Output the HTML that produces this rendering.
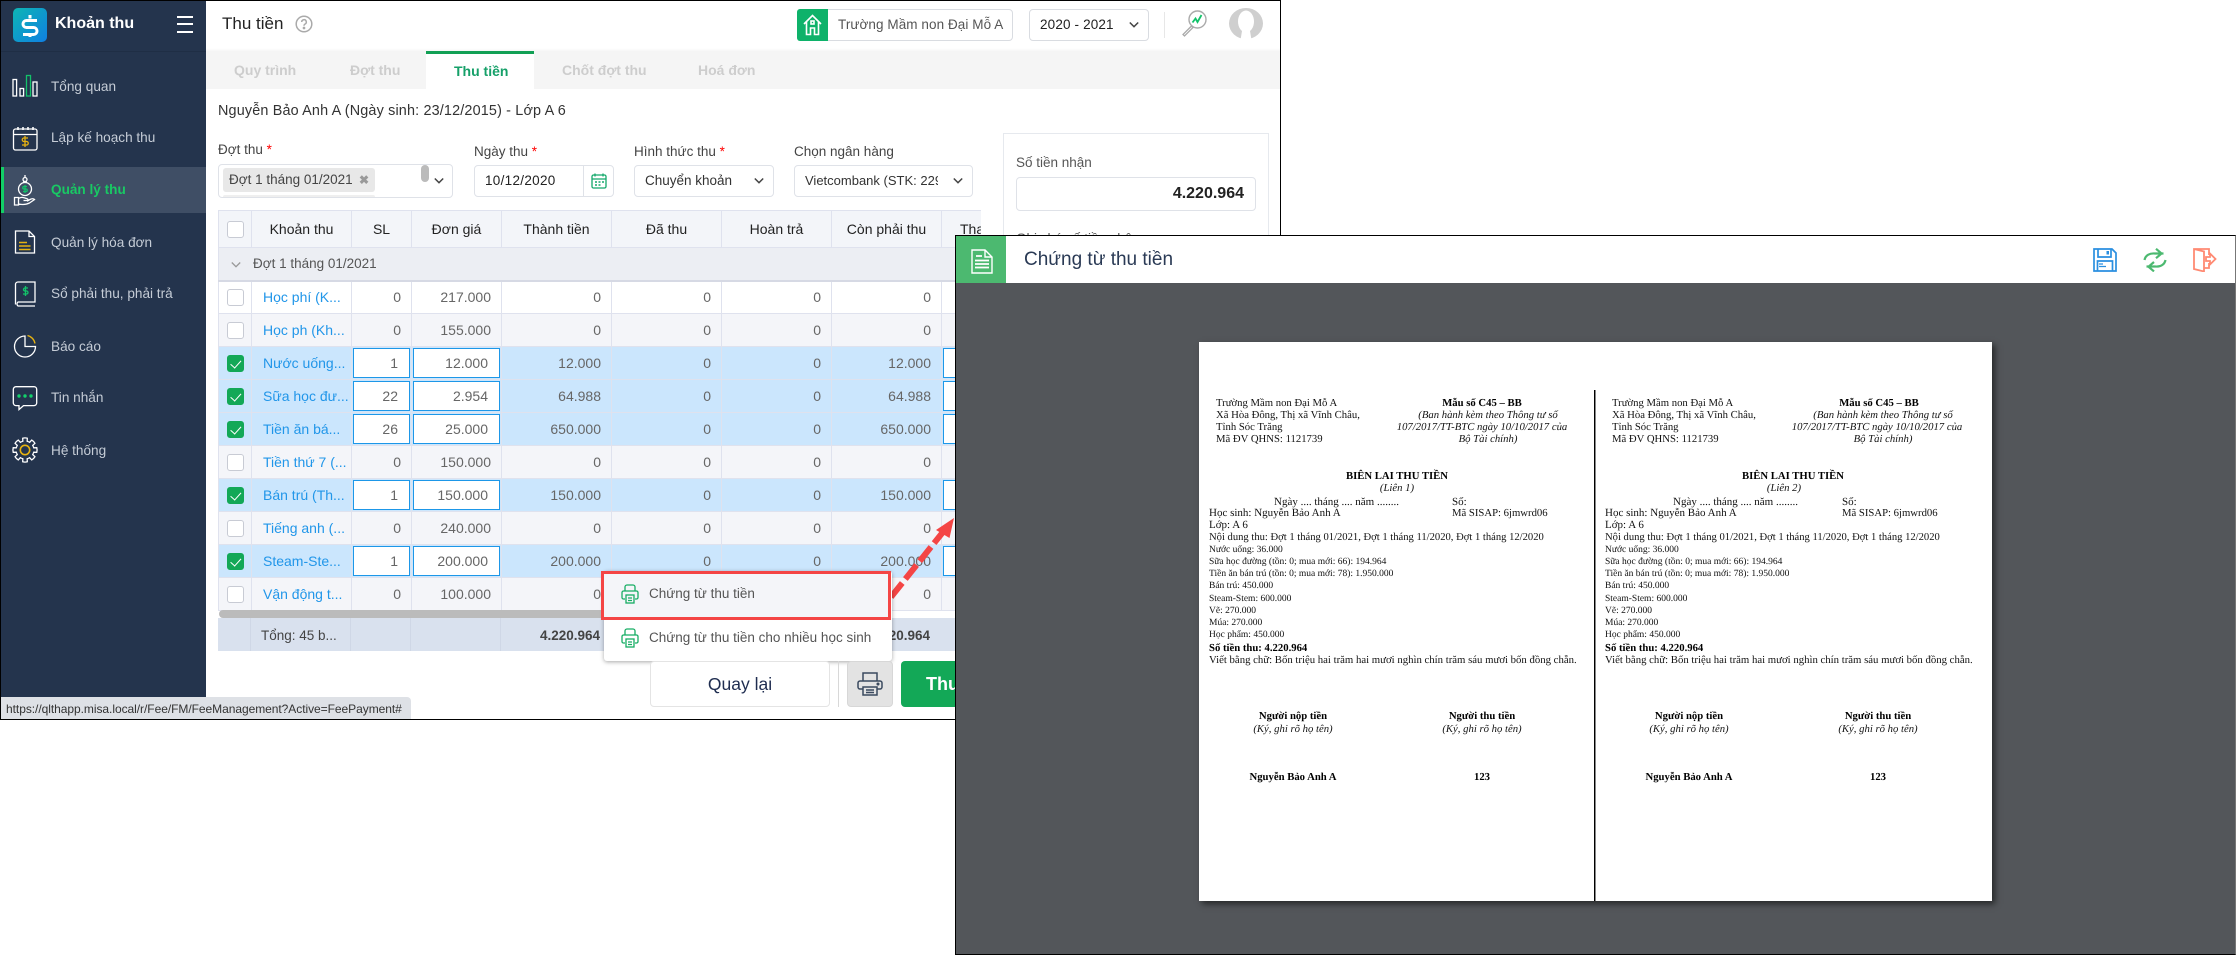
<!DOCTYPE html>
<html lang="vi">
<head>
<meta charset="utf-8">
<title>Chứng từ thu tiền</title>
<style>
*{box-sizing:border-box}
html,body{margin:0;padding:0;width:2237px;height:955px;overflow:hidden;background:#fff;font-family:"Liberation Sans","Noto Sans CJK SC",sans-serif;color:#333}
.a{position:absolute;white-space:nowrap;line-height:20px}
.cx{transform:translateX(-50%)}
#win{position:absolute;left:0;top:0;width:1281px;height:720px;overflow:hidden;background:#fff;border-top:1px solid #000;border-left:1px solid #000;border-right:1px solid #000;border-bottom:1px solid #000}
#win>*{margin-left:-1px;margin-top:-1px}
.box{position:absolute;border:1px solid #dfe2e8;border-radius:4px;background:#fff}
.m{position:absolute;left:51px;color:#c5ccd6;font-size:13.6px;line-height:20px;white-space:nowrap}
.tab{position:absolute;top:60px;font-size:14px;font-weight:bold;color:#cdcdcd;line-height:20px;white-space:nowrap}
.lb{font-size:13.5px;color:#444}
.lb b{color:#f00;font-weight:normal}
.val{font-size:13.5px;color:#333}
#tw{position:absolute;left:218px;top:210px;width:763px;height:401px;overflow:hidden}
table{border-collapse:collapse;table-layout:fixed;width:763px}
td,th{border:1px solid #dfe2ee;padding:0 10px;font-size:14px;height:33px;text-align:right;color:#666;font-weight:normal;white-space:nowrap;overflow:hidden}
th{height:37px;background:#f3f5f9;color:#222;text-align:center;font-weight:normal;padding:0 2px}
tr.g td{background:#eceef3;border-bottom:2px solid #d6d9e4;text-align:left;color:#555;padding-left:34px;font-size:13.5px}
tr.w td{background:#fff}
tr.z td{background:#f4f5f9}
tr.s td{background:#cbe6fd}
td.n{text-align:left;color:#2196e9;padding-left:11px;padding-right:0}
td.c{padding:0;text-align:center}
td.i{padding:0 1px 1px 1px;background:#cbe6fd}
td.i div{height:30px;line-height:28px;background:#fff;border:1px solid #1d97e8;padding-right:11px}
i.cb{display:inline-block;width:17px;height:17px;border:1px solid #c8cbd4;border-radius:3px;background:#fff;position:relative;vertical-align:middle}
i.on{background:#13a857;border-color:#13a857}
i.on:after{content:"";position:absolute;left:5px;top:2.5px;width:5px;height:8.5px;border:solid #fff;border-width:0 1.6px 1.6px 0;transform:rotate(42deg)}
#rc{position:absolute;left:0;top:0;width:2237px;height:955px;pointer-events:none;filter:blur(.25px)}
.d{position:absolute;white-space:nowrap;font-family:"Liberation Serif","Noto Serif CJK SC",serif;font-size:10.7px;line-height:12px;color:#111;text-rendering:geometricPrecision}
.r{font-size:11px}
.sm{font-size:9.5px}
.ln{font-size:10.75px}
.nd{font-size:10.6px}
.bi{font-weight:bold;color:#000}
.it{font-style:italic}
#modal{position:absolute;left:955px;top:235px;width:1281px;height:720px;background:#53565a;border:1px solid #000;border-right:1px solid #777;overflow:hidden}
</style>
</head>
<body>

<div id="win">
  <!-- sidebar -->
  <div style="position:absolute;left:0;top:0;width:206px;height:720px;background:#24344d"></div>
  <div style="position:absolute;left:13px;top:8px;width:34px;height:34px;border-radius:5px;background:linear-gradient(135deg,#0eb6b4,#0f7fe2)">
    <svg width="34" height="34" viewBox="0 0 34 34" fill="none" stroke="#fff" stroke-width="3"><path d="M24 12.5H13.5a3.5 3.5 0 0 0 0 7h7a3.5 3.5 0 0 1 0 7H10"/><path d="M17 7v3.5M17 25.5v3.5"/></svg>
  </div>
  <div class="a" style="left:55px;top:14px;font-size:16px;font-weight:bold;color:#fff">Khoản thu</div>
  <div style="position:absolute;left:177px;top:16px;width:16px;height:2px;background:#fff"></div>
  <div style="position:absolute;left:177px;top:23px;width:16px;height:2px;background:#fff"></div>
  <div style="position:absolute;left:177px;top:31px;width:16px;height:2px;background:#fff"></div>
  <div style="position:absolute;left:0;top:51px;width:206px;height:1px;background:#1f2e45"></div>

  <div style="position:absolute;left:1px;top:167px;width:205px;height:46px;background:#3f4e65;border-left:3px solid #12cf66"></div>

  <svg style="position:absolute;left:0;top:60px" width="206" height="420" viewBox="0 60 206 420" fill="none" stroke="#fff" stroke-width="1.3">
    <defs><path id="tooth" d="M-3.44-8.31L-2.18-8.73-2.29-11.78Q0-12.4 2.29-11.78L2.18-8.73 3.44-8.31"/></defs>
    <!-- tong quan -->
    <rect x="13" y="79.5" width="3.6" height="16.5"/><rect x="20" y="88.5" width="3.6" height="7.5"/>
    <rect x="26.5" y="75.5" width="4" height="20.5" stroke="#13c26a"/><rect x="33" y="82" width="4" height="14"/>
    <!-- lap ke hoach -->
    <rect x="13.5" y="129" width="23.5" height="21" rx="2"/><path d="M13.5 134.5H37" />
    <path d="M18 127v3M23 127v3M28 127v3M33 127v3" stroke-width="1.6"/>
    <path d="M28 138h-4a1.5 1.5 0 0 0 0 3.5h2.5a1.5 1.5 0 0 1 0 3.5H22M25 136v11" stroke="#e6b211"/>
    <!-- quan ly thu -->
    <circle cx="25" cy="189" r="6.5"/><circle cx="25" cy="179.5" r="2"/><path d="M25 175v2M23 182l4 0" />
    <path d="M27 186.5h-3a1.2 1.2 0 0 0 0 2.5h2a1.2 1.2 0 0 1 0 2.5h-3M25 185v8" stroke="#13c26a"/>
    <path d="M14.5 197.5h4v7.5h-4zM18.5 198.5c3-2 5-1 8 0 2 .6 2 2 0 2h-3M18.5 204c5 1 8 .5 11-1l5-3.5c-1-1-3-.8-4.5 0l-3 1.7"/>
    <!-- hoa don -->
    <path d="M15.5 231h13.5l5.5 5.5V253h-19z"/><path d="M29 231v5.5h5.5"/>
    <path d="M19 242.5h8M19 246h11.5M19 249.5h11.5" stroke="#e6b211" stroke-width="1.5"/>
    <!-- so phai thu -->
    <path d="M18 282h17v20H18a2.5 2.5 0 0 0 0 4h17M15.5 304.500V284.500a2.500 2.500 0 0 1 2.500-2.500" />
    <path d="M28 288h-3a1.200 1.200 0 0 0 0 3h1.500a1.200 1.200 0 0 1 0 3h-3.500M25.500 286v10" stroke="#13c26a"/>
    <!-- bao cao -->
    <path d="M25 336a10.500 10.500 0 1 0 10.500 10.500H25z"/><path d="M27.500 335.500a10 10 0 0 1 7.500 8" stroke="#e6b211"/>
    <!-- tin nhan -->
    <path d="M16 386.700h18a2.700 2.700 0 0 1 2.700 2.700v13.500a2.700 2.700 0 0 1-2.700 2.700H23.500l-4.500 4v-4h-3a2.700 2.700 0 0 1-2.700-2.700V389.400a2.700 2.700 0 0 1 2.700-2.700z"/>
    <circle cx="19" cy="396" r="1.700" fill="#13d06a" stroke="none"/><circle cx="25" cy="396" r="1.700" fill="#13d06a" stroke="none"/><circle cx="31" cy="396" r="1.700" fill="#13d06a" stroke="none"/>
    <!-- he thong -->
    <g transform="translate(25 450)"><use href="#tooth"/><use href="#tooth" transform="rotate(45)"/><use href="#tooth" transform="rotate(90)"/><use href="#tooth" transform="rotate(135)"/><use href="#tooth" transform="rotate(180)"/><use href="#tooth" transform="rotate(225)"/><use href="#tooth" transform="rotate(270)"/><use href="#tooth" transform="rotate(315)"/>
    <circle r="4.700" stroke="#e6b211" stroke-width="1.600"/></g>
  </svg>

  <div class="m" style="top:77px">Tổng quan</div>
  <div class="m" style="top:128px">Lập kế hoạch thu</div>
  <div class="m" style="top:180px;color:#19c964;font-weight:bold">Quản lý thu</div>
  <div class="m" style="top:233px">Quản lý hóa đơn</div>
  <div class="m" style="top:284px">Sổ phải thu, phải trả</div>
  <div class="m" style="top:337px">Báo cáo</div>
  <div class="m" style="top:388px">Tin nhắn</div>
  <div class="m" style="top:441px">Hệ thống</div>

  <!-- header -->
  <div class="a" style="left:222px;top:14px;font-size:17px;color:#222">Thu tiền</div>
  <svg style="position:absolute;left:295px;top:15px" width="18" height="18" viewBox="0 0 18 18" fill="none" stroke="#aaa" stroke-width="1.500"><circle cx="9" cy="9" r="7.800"/><path d="M6.700 7a2.300 2.300 0 1 1 3.400 2c-.8.500-1.100 1-1.100 1.800"/><circle cx="9" cy="13" r=".6" fill="#aaa"/></svg>
  <div style="position:absolute;left:206px;top:48px;width:1075px;height:3px;background:linear-gradient(rgba(255,255,255,0),rgba(0,0,0,.03))"></div>

  <div class="box" style="left:797px;top:9px;width:216px;height:32px;border-color:#d9dce1"></div>
  <div style="position:absolute;left:797px;top:9px;width:31px;height:32px;background:#0eb26a;border-radius:3px 0 0 3px">
    <svg width="31" height="32" viewBox="0 0 31 32" fill="none" stroke="#fff" stroke-width="1.600"><path d="M7 15l8.500-8.500L24 15M9.500 13v12.500h4V19h4v6.500h4V13"/><rect x="14" y="12" width="3" height="3"/></svg>
  </div>
  <div class="a val" style="left:838px;top:15px;color:#555;letter-spacing:.07px">Trường Mầm non Đại Mỗ A</div>
  <div class="box" style="left:1029px;top:9px;width:120px;height:32px;border-color:#d9dce1"></div>
  <div class="a val" style="left:1040px;top:15px;letter-spacing:.15px;color:#222">2020 - 2021</div>
  <svg style="position:absolute;left:1129px;top:21px" width="10" height="8" fill="none" stroke="#444" stroke-width="1.500"><path d="M.8 1.500l4.200 4.200 4.200-4.200"/></svg>
  <div style="position:absolute;left:1164px;top:12px;width:1px;height:26px;background:#e7e7e7"></div>
  <svg style="position:absolute;left:1180px;top:9px" width="28" height="28" viewBox="0 0 28 28" fill="none"><circle cx="17.500" cy="10.500" r="8.500" stroke="#aaa" stroke-width="1.400"/><path d="M11.500 17l-8.500 8.500 1.500 1.500 8.500-8.500z" stroke="#aaa" stroke-width="1.300"/><path d="M12.500 13.500l3-4 2 3.500 4-7" stroke="#13c26a" stroke-width="1.800"/></svg>
  <svg style="position:absolute;left:1229px;top:8px" width="34" height="32" viewBox="0 0 34 32"><ellipse cx="17" cy="15.500" rx="17" ry="15.500" fill="#cfcfcf"/><ellipse cx="17" cy="13.500" rx="8" ry="11" fill="#fff"/><path d="M13 23h8l1.500 9h-11z" fill="#fff"/></svg>

  <!-- tabs -->
  <div style="position:absolute;left:206px;top:51px;width:1075px;height:38px;background:#f5f5f5"></div>
  <div style="position:absolute;left:426px;top:51px;width:108px;height:38px;background:#fff;border-top:3px solid #12a055"></div>
  <div class="tab" style="left:234px">Quy trình</div>
  <div class="tab" style="left:350px">Đợt thu</div>
  <div class="tab" style="left:454px;top:61px;color:#16a069">Thu tiền</div>
  <div class="tab" style="left:562px">Chốt đợt thu</div>
  <div class="tab" style="left:698px">Hoá đơn</div>

  <div class="a" style="left:218px;top:101px;font-size:14.4px;color:#333;letter-spacing:.16px">Nguyễn Bảo Anh A (Ngày sinh: 23/12/2015) - Lớp A 6</div>

  <!-- form -->
  <div class="a lb" style="left:218px;top:140px">Đợt thu <b>*</b></div>
  <div class="a lb" style="left:474px;top:142px">Ngày thu <b>*</b></div>
  <div class="a lb" style="left:634px;top:142px">Hình thức thu <b>*</b></div>
  <div class="a lb" style="left:794px;top:142px">Chọn ngân hàng</div>

  <div class="box" style="left:218px;top:164px;width:235px;height:34px"></div>
  <div style="position:absolute;left:223px;top:168px;width:152px;height:24px;background:#e8e8e8;border-radius:3px"></div>
  <div style="position:absolute;left:223px;top:195px;width:152px;height:2px;background:#efefef;border-radius:3px 3px 0 0"></div>
  <div class="a val" style="left:229px;top:170px;font-size:13.500px;color:#444">Đợt 1 tháng 01/2021</div>
  <div class="a" style="left:359px;top:170px;font-size:12px;color:#999;font-weight:bold">✖</div>
  <div style="position:absolute;left:421px;top:165px;width:8px;height:17px;border-radius:4px;background:#bbb"></div>
  <svg style="position:absolute;left:434px;top:177px" width="10" height="8" fill="none" stroke="#444" stroke-width="1.500"><path d="M.8 1.500l4.200 4.200 4.200-4.200"/></svg>

  <div class="box" style="left:474px;top:165px;width:140px;height:32px"></div>
  <div style="position:absolute;left:583px;top:165px;width:1px;height:32px;background:#dfe2e8"></div>
  <div class="a val" style="left:485px;top:171px;color:#222;letter-spacing:.3px">10/12/2020</div>
  <svg style="position:absolute;left:591px;top:173px" width="16" height="16" viewBox="0 0 16 16" fill="none" stroke="#13a86a" stroke-width="1.300"><rect x="1" y="2" width="14" height="13" rx="1.500"/><path d="M1 6h14M4 .5v3M12 .5v3"/><path d="M4 9h2M7.500 9h2M11 9h2M4 12h2M7.500 12h2" stroke-width="1.600"/></svg>

  <div class="box" style="left:634px;top:165px;width:140px;height:32px"></div>
  <div class="a val" style="left:645px;top:171px;color:#333">Chuyển khoản</div>
  <svg style="position:absolute;left:754px;top:177px" width="10" height="8" fill="none" stroke="#444" stroke-width="1.500"><path d="M.8 1.500l4.200 4.200 4.200-4.200"/></svg>

  <div class="box" style="left:794px;top:165px;width:179px;height:32px"></div>
  <div class="a val" style="left:805px;top:171px;width:133px;overflow:hidden;color:#333;font-size:13px">Vietcombank (STK: 2291)</div>
  <svg style="position:absolute;left:953px;top:177px" width="10" height="8" fill="none" stroke="#444" stroke-width="1.500"><path d="M.8 1.500l4.200 4.200 4.200-4.200"/></svg>

  <!-- right panel -->
  <div style="position:absolute;left:1003px;top:133px;width:266px;height:300px;border:1px solid #e6e9ee"></div>
  <div class="a lb" style="left:1016px;top:153px;color:#555">Số tiền nhận</div>
  <div class="box" style="left:1016px;top:177px;width:240px;height:34px"></div>
  <div class="a" style="right:36px;top:184px;font-size:16px;font-weight:bold;color:#222">4.220.964</div>
  <div class="a lb" style="left:1016px;top:229px;color:#555">Ghi chú số tiền nhận</div>

  <!-- table -->
  <div id="tw">
    <table>
      <colgroup><col style="width:33px"><col style="width:100px"><col style="width:60px"><col style="width:90px"><col style="width:110px"><col style="width:110px"><col style="width:110px"><col style="width:110px"><col style="width:40px"></colgroup>
      <tr><th><i class="cb"></i></th><th>Khoản thu</th><th>SL</th><th>Đơn giá</th><th>Thành tiền</th><th>Đã thu</th><th>Hoàn trả</th><th>Còn phải thu</th><th style="text-align:left;padding-left:18px">Tha</th></tr>
      <tr class="g"><td colspan="9" style="position:relative">Đợt 1 tháng 01/2021<svg style="position:absolute;left:12px;top:13px" width="10" height="8" fill="none" stroke="#999" stroke-width="1.300"><path d="M.8 1.500l4.200 4.200 4.200-4.200"/></svg></td></tr>
      <tr class="w"><td class="c"><i class="cb"></i></td><td class="n">Học phí (K...</td><td>0</td><td>217.000</td><td>0</td><td>0</td><td>0</td><td>0</td><td></td></tr>
      <tr class="z"><td class="c"><i class="cb"></i></td><td class="n">Học ph (Kh...</td><td>0</td><td>155.000</td><td>0</td><td>0</td><td>0</td><td>0</td><td></td></tr>
      <tr class="s"><td class="c"><i class="cb on"></i></td><td class="n">Nước uống...</td><td class="i"><div>1</div></td><td class="i"><div>12.000</div></td><td>12.000</td><td>0</td><td>0</td><td>12.000</td><td class="i"><div></div></td></tr>
      <tr class="s"><td class="c"><i class="cb on"></i></td><td class="n">Sữa học đư...</td><td class="i"><div>22</div></td><td class="i"><div>2.954</div></td><td>64.988</td><td>0</td><td>0</td><td>64.988</td><td class="i"><div></div></td></tr>
      <tr class="s"><td class="c"><i class="cb on"></i></td><td class="n">Tiền ăn bá...</td><td class="i"><div>26</div></td><td class="i"><div>25.000</div></td><td>650.000</td><td>0</td><td>0</td><td>650.000</td><td class="i"><div></div></td></tr>
      <tr class="z"><td class="c"><i class="cb"></i></td><td class="n">Tiền thứ 7 (...</td><td>0</td><td>150.000</td><td>0</td><td>0</td><td>0</td><td>0</td><td></td></tr>
      <tr class="s"><td class="c"><i class="cb on"></i></td><td class="n">Bán trú (Th...</td><td class="i"><div>1</div></td><td class="i"><div>150.000</div></td><td>150.000</td><td>0</td><td>0</td><td>150.000</td><td class="i"><div></div></td></tr>
      <tr class="z"><td class="c"><i class="cb"></i></td><td class="n">Tiếng anh (...</td><td>0</td><td>240.000</td><td>0</td><td>0</td><td>0</td><td>0</td><td></td></tr>
      <tr class="s"><td class="c"><i class="cb on"></i></td><td class="n">Steam-Ste...</td><td class="i"><div>1</div></td><td class="i"><div>200.000</div></td><td>200.000</td><td>0</td><td>0</td><td>200.000</td><td class="i"><div></div></td></tr>
      <tr class="z"><td class="c"><i class="cb"></i></td><td class="n">Vận động t...</td><td>0</td><td>100.000</td><td>0</td><td>0</td><td>0</td><td>0</td><td></td></tr>
    </table>
  </div>
  <div style="position:absolute;left:219px;top:610px;width:520px;height:8px;border-radius:4px;background:#bbb"></div>

  <!-- summary -->
  <div style="position:absolute;left:218px;top:618px;width:763px;height:33px;background:#d9e1ee"></div>
  <div style="position:absolute;left:250px;top:618px;width:1px;height:33px;background:#cfd7e6"></div>
  <div style="position:absolute;left:350px;top:618px;width:1px;height:33px;background:#cfd7e6"></div>
  <div style="position:absolute;left:410px;top:618px;width:1px;height:33px;background:#cfd7e6"></div>
  <div style="position:absolute;left:500px;top:618px;width:1px;height:33px;background:#cfd7e6"></div>
  <div class="a" style="left:261px;top:626px;font-size:13.500px;color:#444">Tổng: 45 b...</div>
  <div class="a" style="left:500px;width:100px;text-align:right;top:626px;font-size:13.500px;font-weight:bold;color:#444">4.220.964</div>
  <div class="a" style="left:830px;width:100px;text-align:right;top:626px;font-size:13.500px;font-weight:bold;color:#444">4.220.964</div>

  <!-- arrow -->
  <svg style="position:absolute;left:0;top:0;pointer-events:none" width="1281" height="720" fill="none">
    <path d="M891 597L943 532" stroke="#f44545" stroke-width="6" stroke-dasharray="18 5"/>
    <path d="M954 518L936 530 949.500 538z" fill="#f44545"/>
  </svg>

  <!-- popup -->
  <div style="position:absolute;left:604px;top:571px;width:288px;height:90px;background:#fff;border-radius:3px;box-shadow:0 1px 4px rgba(0,0,0,.35)"></div>
  <div style="position:absolute;left:601px;top:571px;width:290px;height:49px;background:#f4f5f9;border:3px solid #f44545"></div>
  <svg style="position:absolute;left:621px;top:584px" width="18" height="20" viewBox="0 0 18 20" fill="none" stroke="#16ad63" stroke-width="1.300"><path d="M4 7V3a2 2 0 0 1 2-2h6a2 2 0 0 1 2 2v4"/><path d="M4 15H2.500A1.500 1.500 0 0 1 1 13.500v-5A1.500 1.500 0 0 1 2.500 7h13A1.500 1.500 0 0 1 17 8.500v5a1.500 1.500 0 0 1-1.500 1.500H14"/><rect x="5" y="11" width="8" height="8"/><path d="M7 14h4M7 16.500h4"/></svg>
  <svg style="position:absolute;left:621px;top:628px" width="18" height="20" viewBox="0 0 18 20" fill="none" stroke="#16ad63" stroke-width="1.300"><path d="M4 7V3a2 2 0 0 1 2-2h6a2 2 0 0 1 2 2v4"/><path d="M4 15H2.500A1.500 1.500 0 0 1 1 13.500v-5A1.500 1.500 0 0 1 2.500 7h13A1.500 1.500 0 0 1 17 8.500v5a1.500 1.500 0 0 1-1.500 1.500H14"/><rect x="5" y="11" width="8" height="8"/><path d="M7 14h4M7 16.500h4"/></svg>
  <div class="a" style="left:649px;top:584px;font-size:13.500px;color:#555">Chứng từ thu tiền</div>
  <div class="a" style="left:649px;top:628px;font-size:13.500px;color:#555">Chứng từ thu tiền cho nhiều học sinh</div>

  <!-- buttons -->
  <div class="box" style="left:650px;top:661px;width:180px;height:46px;border-color:#e4e4e4"></div>
  <div class="a cx" style="left:740px;top:674px;font-size:17.5px;color:#1f2d50">Quay lại</div>
  <div style="position:absolute;left:838px;top:661px;width:1px;height:46px;background:#d8d8d8"></div>
  <div style="position:absolute;left:847px;top:661px;width:46px;height:46px;background:#e3e3e3;border:1px solid #d7d7d7;border-radius:4px"></div>
  <svg style="position:absolute;left:857px;top:671px" width="26" height="26" viewBox="0 0 26 26" fill="none" stroke="#3b4a5f" stroke-width="1.500"><path d="M6 10V2h14v8"/><path d="M6 18H3a2 2 0 0 1-2-2v-4a2 2 0 0 1 2-2h20a2 2 0 0 1 2 2v4a2 2 0 0 1-2 2h-3"/><rect x="6" y="16" width="14" height="8"/><path d="M9 19h8M9 21.500h8"/><circle cx="21" cy="13" r=".8" fill="#3b4a5f"/></svg>
  <div style="position:absolute;left:901px;top:661px;width:70px;height:46px;background:#13a857;border-radius:4px"></div>
  <div class="a" style="left:926px;top:674px;font-size:18px;font-weight:bold;color:#fff">Thu</div>

  <!-- status -->
  <div style="position:absolute;left:1px;top:697px;width:410px;height:22px;background:#dee1e6;border-radius:0 4px 0 0"></div>
  <div class="a" style="left:6px;top:699px;font-size:12px;color:#333;letter-spacing:-.05px">https://qlthapp.misa.local/r/Fee/FM/FeeManagement?Active=FeePayment#</div>
</div>

<!-- modal -->
<div id="modal">
  <div style="position:absolute;left:0;top:0;width:100%;height:47px;background:#fff"></div>
  <div style="position:absolute;left:0;top:0;width:50px;height:47px;background:#4cb970"></div>
  <svg style="position:absolute;left:15px;top:13px" width="22" height="25" viewBox="0 0 22 25" fill="none" stroke="#fff" stroke-width="1.400"><path d="M1 1h13l7 7v16H1z"/><path d="M14 1v7h7"/><path d="M5 7h6M4 11.500h14M4 15h14M4 18.500h14" stroke-width="1.700"/></svg>
  <div class="a" style="left:68px;top:14px;font-size:19px;color:#2a3a55;line-height:20px">Chứng từ thu tiền</div>
  <svg style="position:absolute;left:1137px;top:12px" width="24" height="24" viewBox="0 0 24 24" fill="none" stroke="#2a8fe0" stroke-width="1.700"><path d="M1 1h18l4 4v18H1z"/><path d="M5 1v8h13V1"/><rect x="13.500" y="3" width="2.500" height="3.500" fill="#2a8fe0" stroke="none"/><path d="M4.500 23V13h15v10"/><path d="M6 16h4M6 18.500h7" stroke-width="1.200"/></svg>
  <svg style="position:absolute;left:1187px;top:12px" width="24" height="24" viewBox="0 0 24 24" fill="none" stroke="#4cb970" stroke-width="2.200"><path d="M1.500 12C2.500 7 7 5 12 5.500h8.500M13 .800l5.500 4.700-5.500 4.700"/><path d="M22.500 12c-1 5-5.500 7-10.500 6.500H3.500M11 14l-5.500 4.700 5.500 4.700"/></svg>
  <svg style="position:absolute;left:1237px;top:12px" width="24" height="24" viewBox="0 0 24 24" fill="none" stroke="#ff8a73" stroke-width="1.800"><path d="M16 7V1H1v20l10 2.500V3.500L1 1"/><path d="M11 20h5v-5"/><path d="M13 9h4V5.500l5.500 5.500-5.500 5.500V13h-4z"/></svg>

  <div style="position:absolute;left:243px;top:106px;width:793px;height:559px;background:#fff;box-shadow:3px 3px 6px rgba(0,0,0,.55)"></div>
  <div style="position:absolute;left:638px;top:154px;width:1px;height:511px;background:#000"></div>
  <div style="position:absolute;left:639px;top:154px;width:1px;height:511px;background:#888"></div>
</div>

<!-- receipt text, Lien 1 -->
<div id="rc">
<span class="d" style="left:1216px;top:397px">Trường Mầm non Đại Mỗ A</span>
<span class="d" style="left:1216px;top:409px">Xã Hòa Đông, Thị xã Vĩnh Châu,</span>
<span class="d" style="left:1216px;top:421px">Tỉnh Sóc Trăng</span>
<span class="d" style="left:1216px;top:433px">Mã ĐV QHNS: 1121739</span>
<span class="d bi cx" style="left:1482px;top:397px">Mẫu số C45 – BB</span>
<span class="d it cx" style="left:1488px;top:409px">(Ban hành kèm theo Thông tư số</span>
<span class="d it cx" style="left:1482px;top:421px">107/2017/TT-BTC ngày 10/10/2017 của</span>
<span class="d it cx" style="left:1488px;top:433px">Bộ Tài chính)</span>
<span class="d bi cx" style="left:1397px;top:470px">BIÊN LAI THU TIỀN</span>
<span class="d it cx" style="left:1397px;top:482px">(Liên 1)</span>
<span class="d r" style="left:1274px;top:496px">Ngày .... tháng .... năm ........</span>
<span class="d r" style="left:1452px;top:496px">Số:</span>
<span class="d r" style="left:1209px;top:507px">Học sinh: Nguyễn Bảo Anh A</span>
<span class="d" style="left:1452px;top:507px">Mã SISAP: 6jmwrd06</span>
<span class="d r" style="left:1209px;top:519px">Lớp: A 6</span>
<span class="d nd" style="left:1209px;top:532px">Nội dung thu: Đợt 1 tháng 01/2021, Đợt 1 tháng 11/2020, Đợt 1 tháng 12/2020</span>
<span class="d sm" style="left:1209px;top:544px">Nước uống: 36.000</span>
<span class="d sm" style="left:1209px;top:556px">Sữa học đường (tồn: 0; mua mới: 66): 194.964</span>
<span class="d sm" style="left:1209px;top:568px">Tiền ăn bán trú (tồn: 0; mua mới: 78): 1.950.000</span>
<span class="d sm" style="left:1209px;top:580px">Bán trú: 450.000</span>
<span class="d sm" style="left:1209px;top:593px">Steam-Stem: 600.000</span>
<span class="d sm" style="left:1209px;top:605px">Vẽ: 270.000</span>
<span class="d sm" style="left:1209px;top:617px">Múa: 270.000</span>
<span class="d sm" style="left:1209px;top:629px">Học phẩm: 450.000</span>
<span class="d bi" style="left:1209px;top:642px">Số tiền thu: 4.220.964</span>
<span class="d ln" style="left:1209px;top:654px">Viết bằng chữ: Bốn triệu hai trăm hai mươi nghìn chín trăm sáu mươi bốn đồng chẵn.</span>
<span class="d bi cx" style="left:1293px;top:710px">Người nộp tiền</span>
<span class="d it cx" style="left:1293px;top:723px">(Ký, ghi rõ họ tên)</span>
<span class="d bi cx" style="left:1482px;top:710px">Người thu tiền</span>
<span class="d it cx" style="left:1482px;top:723px">(Ký, ghi rõ họ tên)</span>
<span class="d bi cx" style="left:1293px;top:771px">Nguyễn Bảo Anh A</span>
<span class="d bi cx" style="left:1482px;top:771px">123</span>

<!-- Lien 2 -->
<span class="d" style="left:1612px;top:397px">Trường Mầm non Đại Mỗ A</span>
<span class="d" style="left:1612px;top:409px">Xã Hòa Đông, Thị xã Vĩnh Châu,</span>
<span class="d" style="left:1612px;top:421px">Tỉnh Sóc Trăng</span>
<span class="d" style="left:1612px;top:433px">Mã ĐV QHNS: 1121739</span>
<span class="d bi cx" style="left:1879px;top:397px">Mẫu số C45 – BB</span>
<span class="d it cx" style="left:1883px;top:409px">(Ban hành kèm theo Thông tư số</span>
<span class="d it cx" style="left:1877px;top:421px">107/2017/TT-BTC ngày 10/10/2017 của</span>
<span class="d it cx" style="left:1883px;top:433px">Bộ Tài chính)</span>
<span class="d bi cx" style="left:1793px;top:470px">BIÊN LAI THU TIỀN</span>
<span class="d it cx" style="left:1784px;top:482px">(Liên 2)</span>
<span class="d r" style="left:1673px;top:496px">Ngày .... tháng .... năm ........</span>
<span class="d r" style="left:1842px;top:496px">Số:</span>
<span class="d r" style="left:1605px;top:507px">Học sinh: Nguyễn Bảo Anh A</span>
<span class="d" style="left:1842px;top:507px">Mã SISAP: 6jmwrd06</span>
<span class="d r" style="left:1605px;top:519px">Lớp: A 6</span>
<span class="d nd" style="left:1605px;top:532px">Nội dung thu: Đợt 1 tháng 01/2021, Đợt 1 tháng 11/2020, Đợt 1 tháng 12/2020</span>
<span class="d sm" style="left:1605px;top:544px">Nước uống: 36.000</span>
<span class="d sm" style="left:1605px;top:556px">Sữa học đường (tồn: 0; mua mới: 66): 194.964</span>
<span class="d sm" style="left:1605px;top:568px">Tiền ăn bán trú (tồn: 0; mua mới: 78): 1.950.000</span>
<span class="d sm" style="left:1605px;top:580px">Bán trú: 450.000</span>
<span class="d sm" style="left:1605px;top:593px">Steam-Stem: 600.000</span>
<span class="d sm" style="left:1605px;top:605px">Vẽ: 270.000</span>
<span class="d sm" style="left:1605px;top:617px">Múa: 270.000</span>
<span class="d sm" style="left:1605px;top:629px">Học phẩm: 450.000</span>
<span class="d bi" style="left:1605px;top:642px">Số tiền thu: 4.220.964</span>
<span class="d ln" style="left:1605px;top:654px">Viết bằng chữ: Bốn triệu hai trăm hai mươi nghìn chín trăm sáu mươi bốn đồng chẵn.</span>
<span class="d bi cx" style="left:1689px;top:710px">Người nộp tiền</span>
<span class="d it cx" style="left:1689px;top:723px">(Ký, ghi rõ họ tên)</span>
<span class="d bi cx" style="left:1878px;top:710px">Người thu tiền</span>
<span class="d it cx" style="left:1878px;top:723px">(Ký, ghi rõ họ tên)</span>
<span class="d bi cx" style="left:1689px;top:771px">Nguyễn Bảo Anh A</span>
<span class="d bi cx" style="left:1878px;top:771px">123</span>
</div>

</body>
</html>
